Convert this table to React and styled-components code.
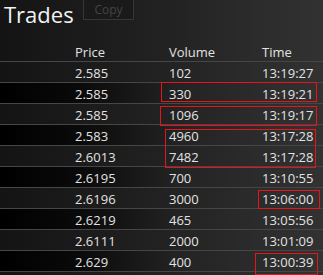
import React from 'react';
import styled, {createGlobalStyle} from 'styled-components';

const Global = createGlobalStyle`
  html, body { margin:0; padding:0; background:#1b1b1b; }
  body { font-family:"Open Sans","Noto Sans",sans-serif; }
`;

const trades = [
  ['2.585', '102', '13:19:27'],
  ['2.585', '330', '13:19:21'],
  ['2.585', '1096', '13:19:17'],
  ['2.583', '4960', '13:17:28'],
  ['2.6013', '7482', '13:17:28'],
  ['2.6195', '700', '13:10:55'],
  ['2.6196', '3000', '13:06:00'],
  ['2.6219', '465', '13:05:56'],
  ['2.6111', '2000', '13:01:09'],
  ['2.629', '400', '13:00:39'],
];

// red highlight frames drawn over the table: row index, left, width, offsets
const marks = [
  {row: 1, left: 161, width: 156, top: -1, height: 20},
  {row: 2, left: 160, width: 157, top: 2, height: 20},
  {row: 3, left: 165, width: 151, top: 4, height: 39},
  {row: 6, left: 258, width: 62, top: 2, height: 19},
  {row: 9, left: 255, width: 63, top: 2, height: 22},
];

const ROW = 21;

const Panel = styled.div`
  width:323px;
  height:275px;
  overflow:hidden;
  position:relative;
  background:linear-gradient(90deg,#141414 0%,#202020 45%,#323232 100%);
  color:#e2e2e2;
`;

const TopBar = styled.div`
  display:flex;
  align-items:flex-start;
  height:40px;
`;

const Title = styled.h1`
  margin:0;
  padding:0 0 0 4px;
  font-weight:400;
  font-size:22px;
  line-height:29px;
  color:#f2f2f2;
  width:79px;
`;

const CopyButton = styled.button`
  margin-top:-1px;
  width:51px;
  height:21px;
  background:#1a1a1a;
  border:1px solid #363636;
  color:#444;
  font-family:inherit;
  font-size:12px;
  padding:0;
`;

const Grid = styled.div`
  display:grid;
  grid-template-columns:75px 94px 93px 1fr;
  align-items:center;
  height:${p => p.$h}px;
  box-sizing:border-box;
  padding-top:2px;
  border-bottom:1px solid #464646;
  font-size:13px;
  background:${p => p.$dark
    ? 'linear-gradient(90deg,#000 0%,#0a0a0a 25%,#232323 55%,#323232 100%)'
    : 'transparent'};
`;

const Cell = styled.span`
  grid-column:${p => p.$col};
  white-space:nowrap;
`;

const Body = styled.div`
  position:relative;
`;

const Mark = styled.div`
  position:absolute;
  border:1px solid #e8141c;
  box-sizing:border-box;
  pointer-events:none;
`;

export default function App() {
  return (
    <Panel>
      <Global />
      <TopBar>
        <Title>Trades</Title>
        <CopyButton>Copy</CopyButton>
      </TopBar>
      <Grid $h={22}>
        <Cell $col={2}>Price</Cell>
        <Cell $col={3}>Volume</Cell>
        <Cell $col={4}>Time</Cell>
      </Grid>
      <Body>
        {trades.map(([price, vol, time], i) => (
          <Grid key={i} $h={ROW} $dark={i % 2 === 1}>
            <Cell $col={2}>{price}</Cell>
            <Cell $col={3}>{vol}</Cell>
            <Cell $col={4}>{time}</Cell>
          </Grid>
        ))}
        {marks.map((m, i) => (
          <Mark
            key={i}
            style={{left: m.left, width: m.width, top: m.row * ROW + m.top, height: m.height}}
          />
        ))}
      </Body>
    </Panel>
  );
}
